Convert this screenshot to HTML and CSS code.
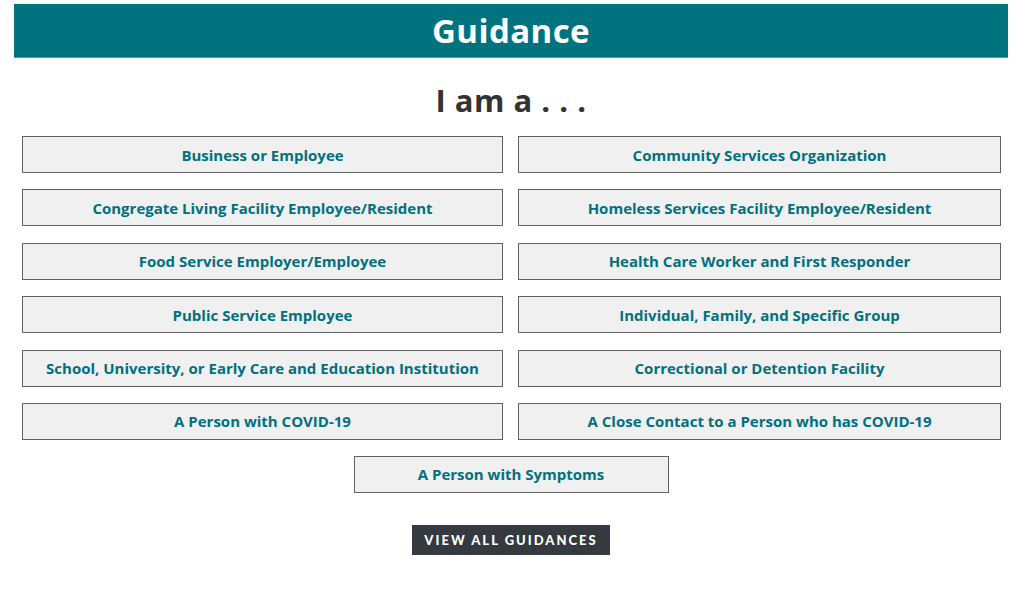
FILE: index.html
```html
<!DOCTYPE html>
<html lang="en">
<head>
<meta charset="utf-8">
<title>Guidance</title>
<link rel="stylesheet" href="styles.css">
</head>
<body>
<div class="page">
  <header class="banner"><h1>Guidance</h1></header>
  <h2 class="lead">I am a . . .</h2>
  <div class="grid">
    <a class="choice" href="#">Business or Employee</a>
    <a class="choice" href="#">Community Services Organization</a>
    <a class="choice" href="#">Congregate Living Facility Employee/Resident</a>
    <a class="choice" href="#">Homeless Services Facility Employee/Resident</a>
    <a class="choice" href="#">Food Service Employer/Employee</a>
    <a class="choice" href="#">Health Care Worker and First Responder</a>
    <a class="choice" href="#">Public Service Employee</a>
    <a class="choice" href="#">Individual, Family, and Specific Group</a>
    <a class="choice" href="#">School, University, or Early Care and Education Institution</a>
    <a class="choice" href="#">Correctional or Detention Facility</a>
    <a class="choice" href="#">A Person with COVID-19</a>
    <a class="choice" href="#">A Close Contact to a Person who has COVID-19</a>
  </div>
  <div class="single">
    <a class="choice wide" href="#">A Person with Symptoms</a>
  </div>
  <div class="all">
    <a class="view-all" href="#">VIEW ALL GUIDANCES</a>
  </div>
</div>
</body>
</html>
```
FILE: styles.css
```css
* { box-sizing: border-box; }
html, body { margin: 0; padding: 0; background: #fff; }
body { font-family: "Open Sans", "Noto Sans", sans-serif; }
.page { padding: 4px 14px 0 14px; }
.banner {
  background: #00737f;
  height: 54px;
  display: flex;
  align-items: center;
  justify-content: center;
  border-bottom: 1px solid #4f9aa3;
}
.banner h1 {
  margin: 0;
  color: #fff;
  font-size: 33px;
  font-weight: 700;
  line-height: 1;
  letter-spacing: 0.4px;
}
.lead {
  margin: 25px 0 0 0;
  text-align: center;
  font-size: 31px;
  font-weight: 700;
  color: #333;
  line-height: 34px;
  letter-spacing: 0.5px;
}
.grid {
  display: grid;
  grid-template-columns: 481px 483px;
  column-gap: 15px;
  row-gap: 16.4px;
  margin: 19px 0 0 8px;
}
.choice {
  display: flex;
  align-items: center;
  justify-content: center;
  height: 37px;
  background: #f0f0f0;
  border: 1px solid #5f6163;
  color: #00717f;
  font-size: 15px;
  font-weight: 700;
  text-decoration: none;
  letter-spacing: 0;
}
.single { display: flex; justify-content: center; margin-top: 16px; }
.wide { width: 315px; }
.all { display: flex; justify-content: center; margin-top: 32px; }
.view-all {
  display: flex;
  align-items: center;
  justify-content: center;
  width: 198px;
  height: 30px;
  background: #343a40;
  color: #fff;
  font-family: "Lato", "Open Sans", sans-serif;
  font-weight: 900;
  font-size: 13px;
  letter-spacing: 2px;
  text-decoration: none;
  box-shadow: 0 1px 0 #b4b8bc;
}
```
